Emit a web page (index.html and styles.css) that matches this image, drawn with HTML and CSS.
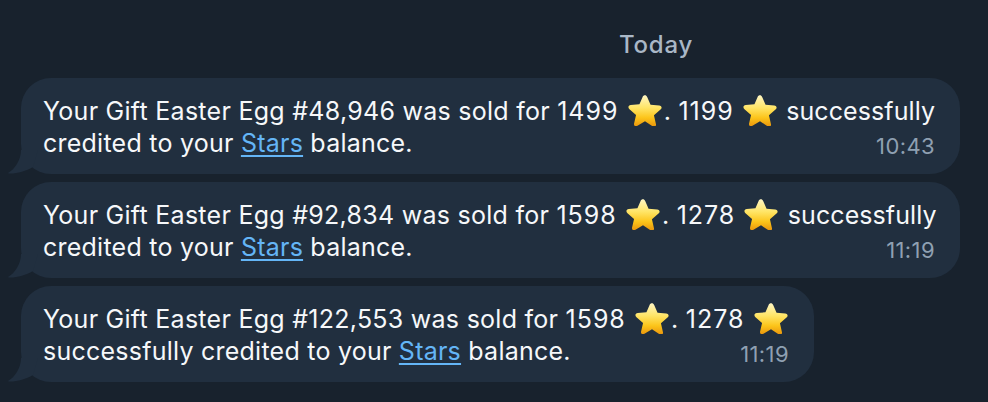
FILE: index.html
```html
<!DOCTYPE html>
<html lang="en">
<head>
<meta charset="utf-8">
<title>Stars messages</title>
<link rel="stylesheet" href="styles.css">
</head>
<body>
<svg class="defs" width="0" height="0" aria-hidden="true">
  <defs>
    <linearGradient id="starfill" x1="0" y1="0" x2="0" y2="1">
      <stop offset="0" stop-color="#fff6c4"/>
      <stop offset="0.4" stop-color="#ffe566"/>
      <stop offset="0.72" stop-color="#fcc419"/>
      <stop offset="1" stop-color="#e8930c"/>
    </linearGradient>
    <symbol id="star" viewBox="0 0 36 34">
      <path d="M18 1.200c1 0 1.700.6 2.200 1.700l3.700 8.500 9.300.9c1.200.1 2 .7 2.300 1.600.3 1-.1 1.900-1 2.700l-7 6.100 2.100 9.100c.3 1.200 0 2.100-.8 2.700-.8.500-1.800.400-2.800-.2L18 29l-8 4.800c-1 .6-2 .7-2.800.2-.8-.6-1.100-1.500-.8-2.700l2.100-9.100-7-6.100c-.9-.8-1.300-1.700-1-2.700.3-.9 1.100-1.500 2.300-1.600l9.300-.9 3.700-8.500C16.300 1.800 17 1.200 18 1.200z" fill="url(#starfill)"/>
    </symbol>
  </defs>
</svg>
<main class="chat">
  <div class="date">Today</div>
  <article class="bubble">
    <svg class="tail" viewBox="0 0 30 24"><path d="M13 0C13 10 7 19 0 23C.5 23.500 1 23.500 2 23.500C10 23.500 18 21 25 17L30 0Z"/></svg>
    <div class="line">Your Gift Easter Egg #48,946 was sold for <span class="num">1499</span> <svg class="star"><use href="#star"/></svg>. <span class="num">1199</span> <svg class="star"><use href="#star"/></svg> <span class="word">successfully</span></div>
    <div class="line last"><span>credited to your <a class="link">Stars</a> balance.</span><time class="time">10:43</time></div>
  </article>
  <article class="bubble">
    <svg class="tail" viewBox="0 0 30 24"><path d="M13 0C13 10 7 19 0 23C.5 23.500 1 23.500 2 23.500C10 23.500 18 21 25 17L30 0Z"/></svg>
    <div class="line">Your Gift Easter Egg #92,834 was sold for <span class="num">1598</span> <svg class="star"><use href="#star"/></svg>. <span class="num">1278</span> <svg class="star"><use href="#star"/></svg> <span class="word">successfully</span></div>
    <div class="line last"><span>credited to your <a class="link">Stars</a> balance.</span><time class="time">11:19</time></div>
  </article>
  <article class="bubble short">
    <svg class="tail" viewBox="0 0 30 24"><path d="M13 0C13 10 7 19 0 23C.5 23.500 1 23.500 2 23.500C10 23.500 18 21 25 17L30 0Z"/></svg>
    <div class="line">Your Gift Easter Egg #122,553 was sold for <span class="num">1598</span> <svg class="star"><use href="#star"/></svg>. <span class="num">1278</span> <svg class="star"><use href="#star"/></svg></div>
    <div class="line last"><span>successfully credited to your <a class="link">Stars</a> balance.</span><time class="time">11:19</time></div>
  </article>
</main>
</body>
</html>
```

FILE: styles.css
```css
* { box-sizing: border-box; }
html, body { margin: 0; height: 100%; }
body {
  background: #18222d;
  font-family: Inter, "Liberation Sans", sans-serif;
  color: #f6f8fa;
  overflow: hidden;
}
.defs { display: block; height: 0; }
.chat {
  display: flex;
  flex-direction: column;
  align-items: flex-start;
  gap: 8px;
  padding: 30px 0 0 21px;
}
.date {
  align-self: stretch;
  height: 30px;
  margin-bottom: 10px;
  padding-left: 598px;
  font-size: 24px;
  font-weight: 500;
  letter-spacing: 0.75px;
  line-height: 30px;
  color: #a9b7c6;
}
.bubble {
  position: relative;
  width: 939px;
  height: 96px;
  padding: 17px 25px 0 22px;
  border-radius: 30px;
  background: #212f3f;
}
.bubble.short { width: 793px; }
.tail {
  position: absolute;
  left: -13px;
  bottom: 0;
  width: 30px;
  height: 24px;
  fill: #212f3f;
}
.line {
  display: block;
  height: 33px;
  font-size: 25px;
  letter-spacing: 0.27px;
  line-height: 33px;
  white-space: nowrap;
}
.line.last {
  display: flex;
  justify-content: space-between;
  margin-top: -1px;
  letter-spacing: 0.24px;
}
.num { letter-spacing: 0.95px; }
.word { letter-spacing: 0.08px; }
.star {
  width: 34px;
  height: 32px;
  margin: -8px 2px -8px 2px;
  vertical-align: 2px;
}
.link {
  color: #64b5f6;
  text-decoration: underline;
  text-underline-offset: 3px;
  text-decoration-thickness: 2px;
}
.time {
  margin-top: 3px;
  font-size: 22px;
  letter-spacing: 0.4px;
  color: #8fa0b2;
}
```
